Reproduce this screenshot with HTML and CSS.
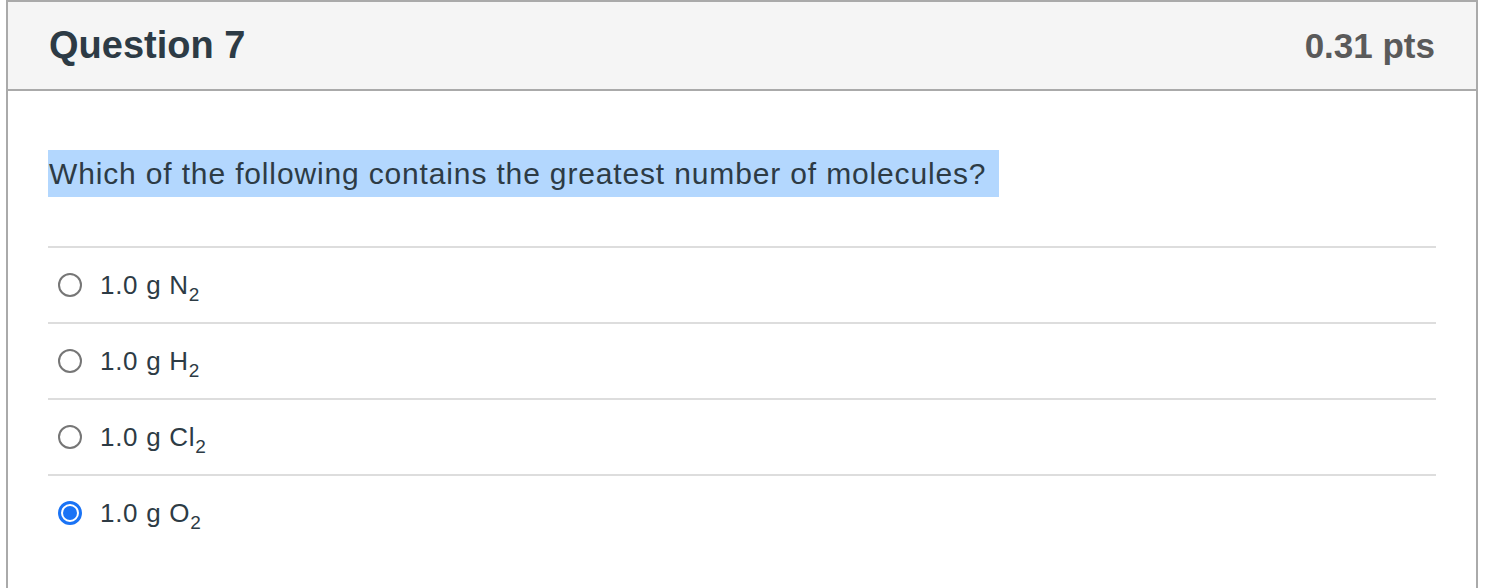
FILE: index.html
```html
<!DOCTYPE html>
<html>
<head>
<meta charset="utf-8">
<link rel="stylesheet" href="styles.css">
</head>
<body>
<div class="question">
  <div class="header">
    <h2 class="title">Question 7</h2>
    <div class="pts">0.31 pts</div>
  </div>
  <div class="content">
    <div class="prompt"><span class="sel">Which of the following contains the greatest number of molecules?</span></div>
    <div class="answers">
      <div class="answer"><span class="radio"></span><span class="label">1.0 g N<sub>2</sub></span></div>
      <div class="answer"><span class="radio"></span><span class="label">1.0 g H<sub>2</sub></span></div>
      <div class="answer"><span class="radio"></span><span class="label">1.0 g Cl<sub>2</sub></span></div>
      <div class="answer"><span class="radio checked"></span><span class="label">1.0 g O<sub>2</sub></span></div>
    </div>
  </div>
</div>
</body>
</html>
```
FILE: styles.css
```css
html, body {
  margin: 0;
  padding: 0;
  background: #fff;
}
body {
  font-family: "Liberation Sans", Arial, Helvetica, sans-serif;
  color: #2d3b45;
}
.question {
  margin-left: 6px;
  width: 1468px;
  border: 2px solid #aaaaaa;
  border-bottom: none;
  height: 600px;
}
.header {
  display: flex;
  justify-content: space-between;
  align-items: center;
  height: 87px;
  padding: 0 41px;
  background: #f5f5f5;
  border-bottom: 2px solid #aaaaaa;
}
.title {
  margin: 0;
  font-size: 38px;
  font-weight: bold;
  color: #2d3b45;
}
.pts {
  font-size: 35px;
  font-weight: bold;
  color: #5a5a5a;
}
.content {
  padding: 59px 40px 0 40px;
}
.prompt {
  height: 47px;
  margin-bottom: 49px;
}
.sel {
  display: inline-block;
  background: #b3d7fe;
  height: 47px;
  line-height: 47px;
  font-size: 30px;
  letter-spacing: 0.85px;
  padding: 0 13px 0 1px;
}
.answer {
  display: flex;
  align-items: center;
  height: 74px;
  border-top: 2px solid #dddddd;
  padding-left: 10px;
}
.radio {
  box-sizing: border-box;
  width: 24px;
  height: 24px;
  border-radius: 50%;
  border: 2px solid #767676;
  background: #fff;
  margin-right: 18px;
  position: relative;
}
.radio.checked {
  border: 3px solid #1a73f5;
}
.radio.checked::after {
  content: "";
  position: absolute;
  left: 2px;
  top: 2px;
  width: 14px;
  height: 14px;
  border-radius: 50%;
  background: #1a73f5;
}
.label {
  font-size: 26px;
  letter-spacing: 0.7px;
  color: #2d3b45;
}
.label sub {
  font-size: 19px;
  vertical-align: -7px;
  line-height: 0;
}
```
